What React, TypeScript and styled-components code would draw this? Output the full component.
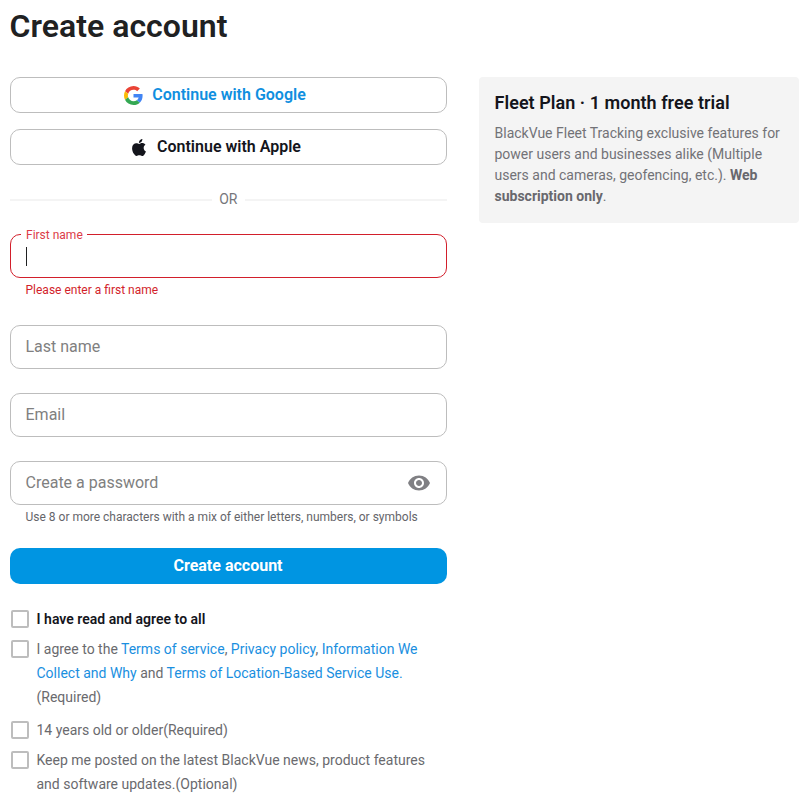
import React from "react";
import styled, { createGlobalStyle, css } from "styled-components";

const GlobalStyle = createGlobalStyle`
  * { box-sizing: border-box; }
  body {
    margin: 0;
    background: #fff;
    color: #6a6a6e;
    font-family: Roboto, "Liberation Sans", sans-serif;
    font-size: 14px;
  }
`;

const Page = styled.main`
  padding: 6px 11px 0 10px;
  height: 805px;
  overflow: hidden;
`;

const Title = styled.h1`
  margin: 0 0 31px -0.5px;
  color: #202122;
  font-size: 32px;
  line-height: 40px;
  font-weight: 600;
  letter-spacing: 0.03px;
`;

const Columns = styled.div`
  display: grid;
  grid-template-columns: 437px 320px;
  column-gap: 32px;
  align-items: start;
`;

const Form = styled.form`
  display: flex;
  flex-direction: column;
`;

const SocialButton = styled.button<{ $color: string; $gap: number; $inset: number }>`
  display: flex;
  align-items: center;
  justify-content: center;
  gap: ${(p) => p.$gap}px;
  height: 36px;
  margin: 0 0 16px;
  padding: 0 ${(p) => p.$inset}px 0 0;
  border: 1px solid #bdbdbd;
  border-radius: 10px;
  background: #fff;
  color: ${(p) => p.$color};
  font: 600 16px/24px Roboto, "Liberation Sans", sans-serif;
`;

const Divider = styled.div`
  display: flex;
  align-items: center;
  gap: 7.5px;
  height: 20px;
  margin: 9px 0 24px;
  color: #76767b;
  line-height: 20px;

  &::before,
  &::after {
    content: "";
    flex: 1;
    height: 2px;
    background: #f4f4f4;
  }
`;

const DividerText = styled.span`
  padding-bottom: 2px;
  margin-left: -0.5px;
`;

const Field = styled.div<{ $error?: boolean; $space: number }>`
  position: relative;
  display: flex;
  align-items: center;
  justify-content: space-between;
  height: 44px;
  margin-bottom: ${(p) => p.$space}px;
  padding: 0 15px 2px 14.5px;
  border: 1px solid ${(p) => (p.$error ? "#d21f2b" : "#bdbdbd")};
  border-radius: 10px;
  color: #808080;
  font-size: 16px;
`;

const FloatingLabel = styled.label`
  position: absolute;
  left: 10px;
  top: -7px;
  padding: 0 4px 0 5px;
  background: #fff;
  color: #dc3b48;
  font-size: 12px;
  line-height: 14px;
`;

const Caret = styled.span`
  width: 1px;
  height: 19px;
  margin-top: 3px;
  background: #202122;
`;

const HelperText = styled.p<{ $error?: boolean; $space: number }>`
  margin: 0 0 ${(p) => p.$space}px;
  padding-left: 15.5px;
  color: ${(p) => (p.$error ? "#d21f2b" : "#65656a")};
  font-size: 12px;
  line-height: 16px;
`;

const SubmitButton = styled.button`
  height: 36px;
  margin: 0 0 23px;
  padding: 0 1px 1px 0;
  border: 0;
  border-radius: 10px;
  background: #0095e2;
  color: #fff;
  font: 700 16px/24px Roboto, "Liberation Sans", sans-serif;
`;

const CheckRow = styled.label<{ $space: number; $strong?: boolean }>`
  display: flex;
  align-items: flex-start;
  gap: 7.5px;
  margin-bottom: ${(p) => p.$space}px;
  padding-left: 1px;
  line-height: 24px;
  ${(p) =>
    p.$strong &&
    css`
      color: #14151c;
      font-weight: 600;
      letter-spacing: 0.02px;
    `}
`;

const CheckBox = styled.span`
  flex: none;
  width: 18px;
  height: 18px;
  margin-top: 3px;
  border: 2px solid #bdbdbd;
  border-radius: 2px;
`;

const CheckText = styled.span`
  width: 400px;
`;

const Link = styled.a`
  color: #1a8fdf;
`;

const PlanCard = styled.aside`
  height: 146px;
  padding: 14px 16px 14px 15.5px;
  border-radius: 4px;
  background: #f4f4f4;
`;

const PlanTitle = styled.h2`
  margin: 0 0 8px;
  color: #14151c;
  font-size: 18px;
  line-height: 24px;
  font-weight: 600;
  letter-spacing: 0.04px;
`;

const PlanText = styled.p`
  margin: 0;
  color: #727277;
  line-height: 21px;

  strong {
    color: #68686d;
    font-weight: 700;
  }
`;

const GoogleIcon = () => (
  <svg width="19" height="19" viewBox="0 0 48 48">
    <path fill="#EA4335" d="M24 9.5c3.54 0 6.71 1.22 9.21 3.6l6.85-6.85C35.9 2.38 30.47 0 24 0 14.62 0 6.51 5.38 2.56 13.22l7.98 6.19C12.43 13.72 17.74 9.5 24 9.5z" />
    <path fill="#4285F4" d="M46.98 24.55c0-1.57-.15-3.09-.38-4.55H24v9.02h12.94c-.58 2.96-2.26 5.48-4.78 7.18l7.73 6c4.51-4.18 7.09-10.36 7.09-17.65z" />
    <path fill="#FBBC05" d="M10.53 28.59c-.48-1.45-.76-2.99-.76-4.59s.27-3.14.76-4.59l-7.98-6.19C.92 16.46 0 20.12 0 24c0 3.88.92 7.54 2.56 10.78l7.97-6.19z" />
    <path fill="#34A853" d="M24 48c6.48 0 11.93-2.13 15.89-5.81l-7.73-6c-2.15 1.45-4.92 2.3-8.16 2.3-6.26 0-11.57-4.22-13.47-9.91l-7.98 6.19C6.51 42.62 14.62 48 24 48z" />
  </svg>
);

const AppleIcon = () => (
  <svg width="14" height="17" viewBox="0 0 814 1000" fill="currentColor">
    <path d="M788.1 340.9c-5.8 4.5-108.2 62.2-108.2 190.5 0 148.4 130.3 200.9 134.2 202.2-.6 3.2-20.7 71.9-68.7 141.9-42.8 61.6-87.5 123.1-155.5 123.1s-85.5-39.5-164-39.5c-76.5 0-103.7 40.8-165.9 40.8s-105.6-57-155.5-127C46.7 790.7 0 663 0 541.8c0-194.4 126.4-297.5 250.8-297.5 66.1 0 121.2 43.4 162.7 43.4 39.5 0 101.1-46 176.3-46 28.5 0 130.9 2.6 198.3 99.2zm-234-181.5c31.1-36.9 53.1-88.1 53.1-139.3 0-7.1-.6-14.3-1.9-20.1-50.6 1.9-110.8 33.7-147.1 75.8-28.5 32.4-55.1 83.6-55.1 135.5 0 7.8 1.3 15.6 1.9 18.1 3.2.6 8.4 1.3 13.6 1.3 45.4 0 102.5-30.4 135.5-71.3z" />
  </svg>
);

const EyeIcon = () => (
  <svg width="24" height="24" viewBox="0 0 24 24" fill="#808084">
    <path d="M12 4.5C7 4.5 2.73 7.61 1 12c1.73 4.39 6 7.5 11 7.5s9.27-3.11 11-7.5c-1.73-4.39-6-7.5-11-7.5zM12 17c-2.76 0-5-2.24-5-5s2.24-5 5-5 5 2.24 5 5-2.24 5-5 5zm0-8c-1.66 0-3 1.34-3 3s1.34 3 3 3 3-1.34 3-3-1.34-3-3-3z" />
  </svg>
);

const EyeButton = styled.span`
  display: flex;
  margin-top: 2px;
`;

export default function App() {
  return (
    <Page>
      <GlobalStyle />
      <Title>Create account</Title>
      <Columns>
        <Form>
          <SocialButton type="button" $color="#108fe0" $gap={9} $inset={27}>
            <GoogleIcon />
            Continue with Google
          </SocialButton>
          <SocialButton type="button" $color="#14151c" $gap={11.5} $inset={24.5}>
            <AppleIcon />
            Continue with Apple
          </SocialButton>
          <Divider>
            <DividerText>OR</DividerText>
          </Divider>
          <Field $error $space={4}>
            <FloatingLabel>First name</FloatingLabel>
            <Caret />
          </Field>
          <HelperText $error $space={27}>Please enter a first name</HelperText>
          <Field $space={24}>Last name</Field>
          <Field $space={24}>Email</Field>
          <Field $space={4}>
            Create a password
            <EyeButton>
              <EyeIcon />
            </EyeButton>
          </Field>
          <HelperText $space={23}>
            Use 8 or more characters with a mix of either letters, numbers, or symbols
          </HelperText>
          <SubmitButton type="button">Create account</SubmitButton>
          <CheckRow $space={6} $strong>
            <CheckBox />
            <CheckText>I have read and agree to all</CheckText>
          </CheckRow>
          <CheckRow $space={9}>
            <CheckBox />
            <CheckText>
              I agree to the <Link>Terms of service</Link>, <Link>Privacy policy</Link>,{" "}
              <Link>Information We Collect and Why</Link> and{" "}
              <Link>Terms of Location-Based Service Use.</Link> (Required)
            </CheckText>
          </CheckRow>
          <CheckRow $space={6}>
            <CheckBox />
            <CheckText>14 years old or older(Required)</CheckText>
          </CheckRow>
          <CheckRow $space={0}>
            <CheckBox />
            <CheckText>
              Keep me posted on the latest BlackVue news, product features and software
              updates.(Optional)
            </CheckText>
          </CheckRow>
        </Form>
        <PlanCard>
          <PlanTitle>Fleet Plan · 1 month free trial</PlanTitle>
          <PlanText>
            BlackVue Fleet Tracking exclusive features for power users and businesses alike
            (Multiple users and cameras, geofencing, etc.). <strong>Web subscription only</strong>.
          </PlanText>
        </PlanCard>
      </Columns>
    </Page>
  );
}
